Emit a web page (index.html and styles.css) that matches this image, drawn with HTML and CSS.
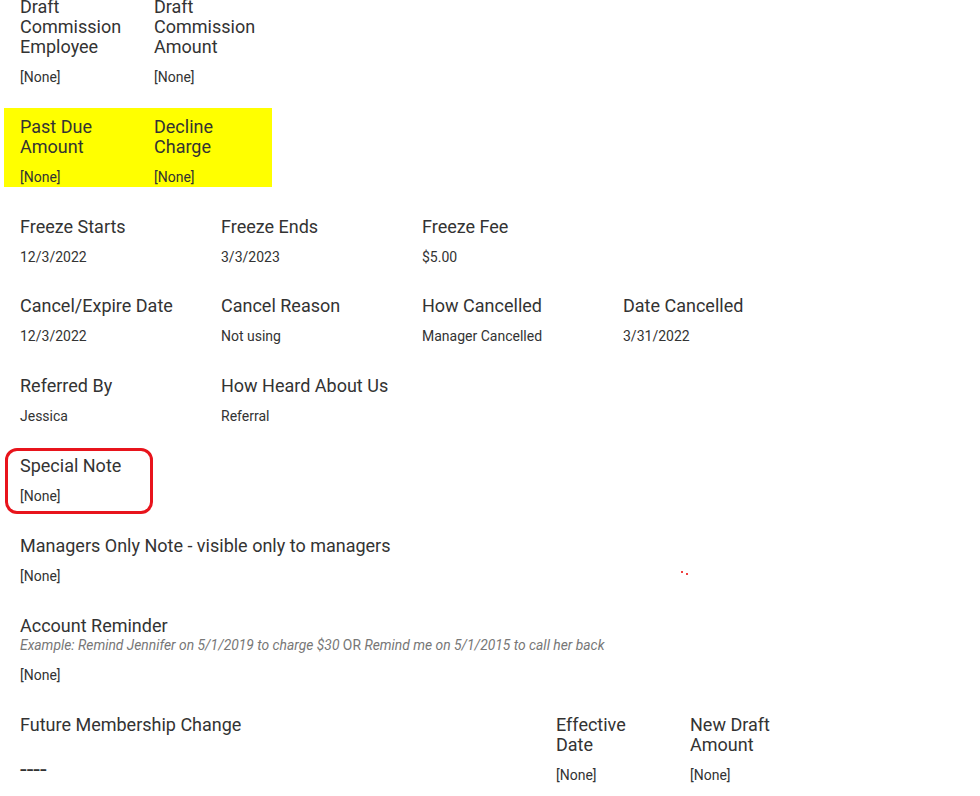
FILE: index.html
```html
<!DOCTYPE html>
<html>
<head>
<meta charset="utf-8">
<link rel="stylesheet" href="styles.css">
</head>
<body>
<div class="page">
  <div class="row">
    <div class="field narrow"><div class="label">Draft Commission Employee</div><div class="value">[None]</div></div>
    <div class="field narrow"><div class="label">Draft Commission Amount</div><div class="value">[None]</div></div>
  </div>
  <div class="row highlight">
    <div class="field narrow"><div class="label">Past Due Amount</div><div class="value">[None]</div></div>
    <div class="field narrow"><div class="label">Decline Charge</div><div class="value">[None]</div></div>
  </div>
  <div class="row tight">
    <div class="field wide"><div class="label">Freeze Starts</div><div class="value">12/3/2022</div></div>
    <div class="field wide"><div class="label">Freeze Ends</div><div class="value">3/3/2023</div></div>
    <div class="field wide"><div class="label">Freeze Fee</div><div class="value">$5.00</div></div>
  </div>
  <div class="row">
    <div class="field wide"><div class="label">Cancel/Expire Date</div><div class="value">12/3/2022</div></div>
    <div class="field wide"><div class="label">Cancel Reason</div><div class="value">Not using</div></div>
    <div class="field wide"><div class="label">How Cancelled</div><div class="value">Manager Cancelled</div></div>
    <div class="field wide"><div class="label">Date Cancelled</div><div class="value">3/31/2022</div></div>
  </div>
  <div class="row">
    <div class="field wide"><div class="label">Referred By</div><div class="value">Jessica</div></div>
    <div class="field wide"><div class="label">How Heard About Us</div><div class="value">Referral</div></div>
  </div>
  <div class="row">
    <div class="field narrow marked"><div class="label">Special Note</div><div class="value">[None]</div><span class="callout"></span></div>
  </div>
  <div class="row dots-row">
    <div class="field full"><div class="label">Managers Only Note - visible only to managers</div><div class="value">[None]</div></div>
    <span class="dot dot-a"></span><span class="dot dot-b"></span>
  </div>
  <div class="row">
    <div class="field full"><div class="label">Account Reminder</div><div class="hint"><i>Example: Remind Jennifer on 5/1/2019 to charge $30</i> OR <i>Remind me on 5/1/2015 to call her back</i></div><div class="value">[None]</div></div>
  </div>
  <div class="row">
    <div class="field future"><div class="label">Future Membership Change</div><div class="value dashes">----</div></div>
    <div class="field narrow"><div class="label">Effective Date</div><div class="value">[None]</div></div>
    <div class="field narrow"><div class="label">New Draft Amount</div><div class="value">[None]</div></div>
  </div>
</div>
</body>
</html>
```

FILE: styles.css
```css
html, body {
  margin: 0;
  padding: 0;
  background: #ffffff;
}
body {
  font-family: Roboto, "Liberation Sans", Arial, sans-serif;
  color: #333333;
  overflow: hidden;
}
.page {
  padding-left: 4px;
  margin-top: -12px;
}
.row {
  display: flex;
  align-items: flex-start;
  margin-bottom: 21px;
}
.row.tight {
  margin-bottom: 20px;
}
.row.highlight {
  background: #ffff00;
  width: 268px;
}
.field {
  box-sizing: border-box;
  padding: 9px 16px 0 16px;
  position: relative;
}
.narrow { width: 134px; }
.wide { width: 201px; }
.full { width: 800px; }
.future { width: 536px; }
.label {
  font-size: 18px;
  line-height: 20px;
  color: #333333;
}
.value {
  font-size: 14px;
  line-height: 20px;
  margin-top: 10px;
  color: #333333;
}
.hint {
  font-size: 13.85px;
  line-height: 19px;
  color: #777777;
}
.hint i { font-style: italic; }
.dashes {
  font-size: 24px;
  line-height: 28px;
  margin-top: 20px;
}
.callout {
  position: absolute;
  left: 1px;
  top: 1px;
  width: 142px;
  height: 60px;
  border: 3px solid #e8141c;
  border-radius: 12px;
}
.dots-row { position: relative; }
.dot {
  position: absolute;
  width: 2px;
  height: 2px;
  background: #f04040;
}
.dot-a { left: 677px; top: 44px; }
.dot-b { left: 682px; top: 46px; }
```
